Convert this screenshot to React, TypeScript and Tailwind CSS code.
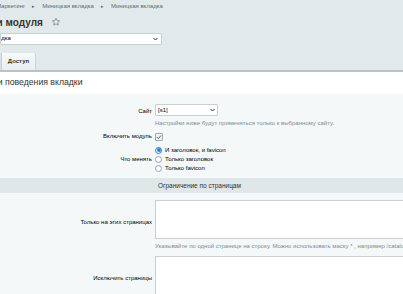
export default function App() {
  return (
    <div className="w-[403px] h-[294px] overflow-hidden bg-[#e2e9eb] font-['Liberation_Sans',Arial,sans-serif] text-black">
      {/* breadcrumbs */}
      <div className="h-[12px] flex items-center gap-[7px] text-[6px] text-[#5b6b7a] whitespace-nowrap pt-[1px] -ml-[4px]">
        <span>Маркетинг</span>
        <span className="text-[5px]">▸</span>
        <span>Миницкая вкладка</span>
        <span className="text-[5px]">▸</span>
        <span>Миницкая вкладка</span>
      </div>

      {/* title */}
      <div className="h-[20px] flex items-center gap-[8px] -ml-[50px] whitespace-nowrap">
        <span className="text-[10px] font-bold text-[#333]">Настройки модуля</span>
        <svg width="10" height="10" viewBox="0 0 24 24" fill="none" stroke="#7a8893" strokeWidth="2" strokeLinejoin="round">
          <path d="M12 3l2.6 5.6 6.1.7-4.5 4.2 1.2 6L12 16.6 6.6 19.5l1.2-6L3.3 9.3l6.1-.7z" />
        </svg>
      </div>

      {/* select */}
      <div className="h-[13px] flex items-center">
        <div className="w-[162px] h-[12px] bg-white border border-[#c7d0d3] rounded-[1px] flex items-center justify-between pr-[3px] text-[6px] whitespace-nowrap overflow-hidden">
          <span className="-ml-[42px]">Миницкая вкладка</span>
          <svg width="5" height="4" viewBox="0 0 10 6" fill="none" stroke="#333" strokeWidth="2">
            <path d="M1 1l4 4 4-4" />
          </svg>
        </div>
      </div>

      {/* tabs */}
      <div className="h-[27px] flex items-end border-b-[2px] border-[#b9c3c6]">
        <div className="w-[2px] h-[17px] bg-[#d6dfe1] border-r border-[#c8d1d4]" />
        <div className="h-[17px] w-[34px] flex items-center justify-center text-[6px] font-bold text-[#333] bg-gradient-to-b from-[#f7f9fa] to-[#e9eef0] border-r border-[#cbd3d6] rounded-tr-[2px]">
          Доступ
        </div>
      </div>

      {/* panel heading */}
      <div className="h-[22px] bg-white flex items-center whitespace-nowrap">
        <span className="text-[8.7px] text-[#333] -ml-[40px]">Настройки поведения вкладки</span>
      </div>

      {/* form */}
      <div className="bg-[#f4f8f8] pt-[10px] text-[6px]">
        <div className="grid grid-cols-[152px_1fr] gap-x-[3px] items-center">
          <div className="text-right pt-[3px]">Сайт</div>
          <div>
            <div className="w-[63px] h-[12px] bg-white border border-[#c7d0d3] rounded-[1px] flex items-center justify-between px-[2px]">
              <span>[s1]</span>
              <svg width="5" height="4" viewBox="0 0 10 6" fill="none" stroke="#333" strokeWidth="2">
                <path d="M1 1l4 4 4-4" />
              </svg>
            </div>
          </div>
          <div />
          <div className="text-[#808c92] mt-[3px] whitespace-nowrap">Настройки ниже будут применяться только к выбранному сайту.</div>

          <div className="text-right mt-[4px]">Включить модуль</div>
          <div className="mt-[4px]">
            <div className="w-[8px] h-[8px] border border-[#a0abb0] bg-[#eef2f3] rounded-[1px] flex items-center justify-center">
              <svg width="6" height="6" viewBox="0 0 10 10" fill="none" stroke="#4d5a61" strokeWidth="1.6">
                <path d="M1.5 5.2l2.3 2.3L8.5 2.5" />
              </svg>
            </div>
          </div>

          <div className="text-right mt-[5px]">Что менять</div>
          <div className="mt-[5px] flex flex-col gap-[1px]">
            <label className="flex items-center gap-[3px] h-[8px]">
              <span className="w-[7px] h-[7px] rounded-full border border-[#2f7de1] flex items-center justify-center">
                <span className="w-[4px] h-[4px] rounded-full bg-[#2f7de1]" />
              </span>
              И заголовок, и favicon
            </label>
            <label className="flex items-center gap-[3px] h-[8px]">
              <span className="w-[7px] h-[7px] rounded-full border border-[#9aa4a8] bg-white" />
              Только заголовок
            </label>
            <label className="flex items-center gap-[3px] h-[8px]">
              <span className="w-[7px] h-[7px] rounded-full border border-[#9aa4a8] bg-white" />
              Только favicon
            </label>
          </div>
        </div>

        <div className="mt-[6px] h-[15px] bg-[#dfe7e9] flex items-center pl-[158px] text-[6.5px] text-[#333]">
          Ограничение по страницам
        </div>

        <div className="grid grid-cols-[152px_1fr] gap-x-[3px] pt-[7px]">
          <div className="text-right self-end pb-[12px]">Только на этих страницах</div>
          <div className="h-[39px] bg-white border border-[#c7d0d3] -mr-[4px]" />
          <div />
          <div className="text-[#808c92] mt-[3px] whitespace-nowrap">Указывайте по одной странице на строку. Можно использовать маску * , например /catalog/*</div>
          <div className="text-right self-end pb-[12px] mt-[5px]">Исключить страницы</div>
          <div className="h-[39px] bg-white border border-[#c7d0d3] mt-[5px] -mr-[4px]" />
        </div>
      </div>
    </div>
  );
}
